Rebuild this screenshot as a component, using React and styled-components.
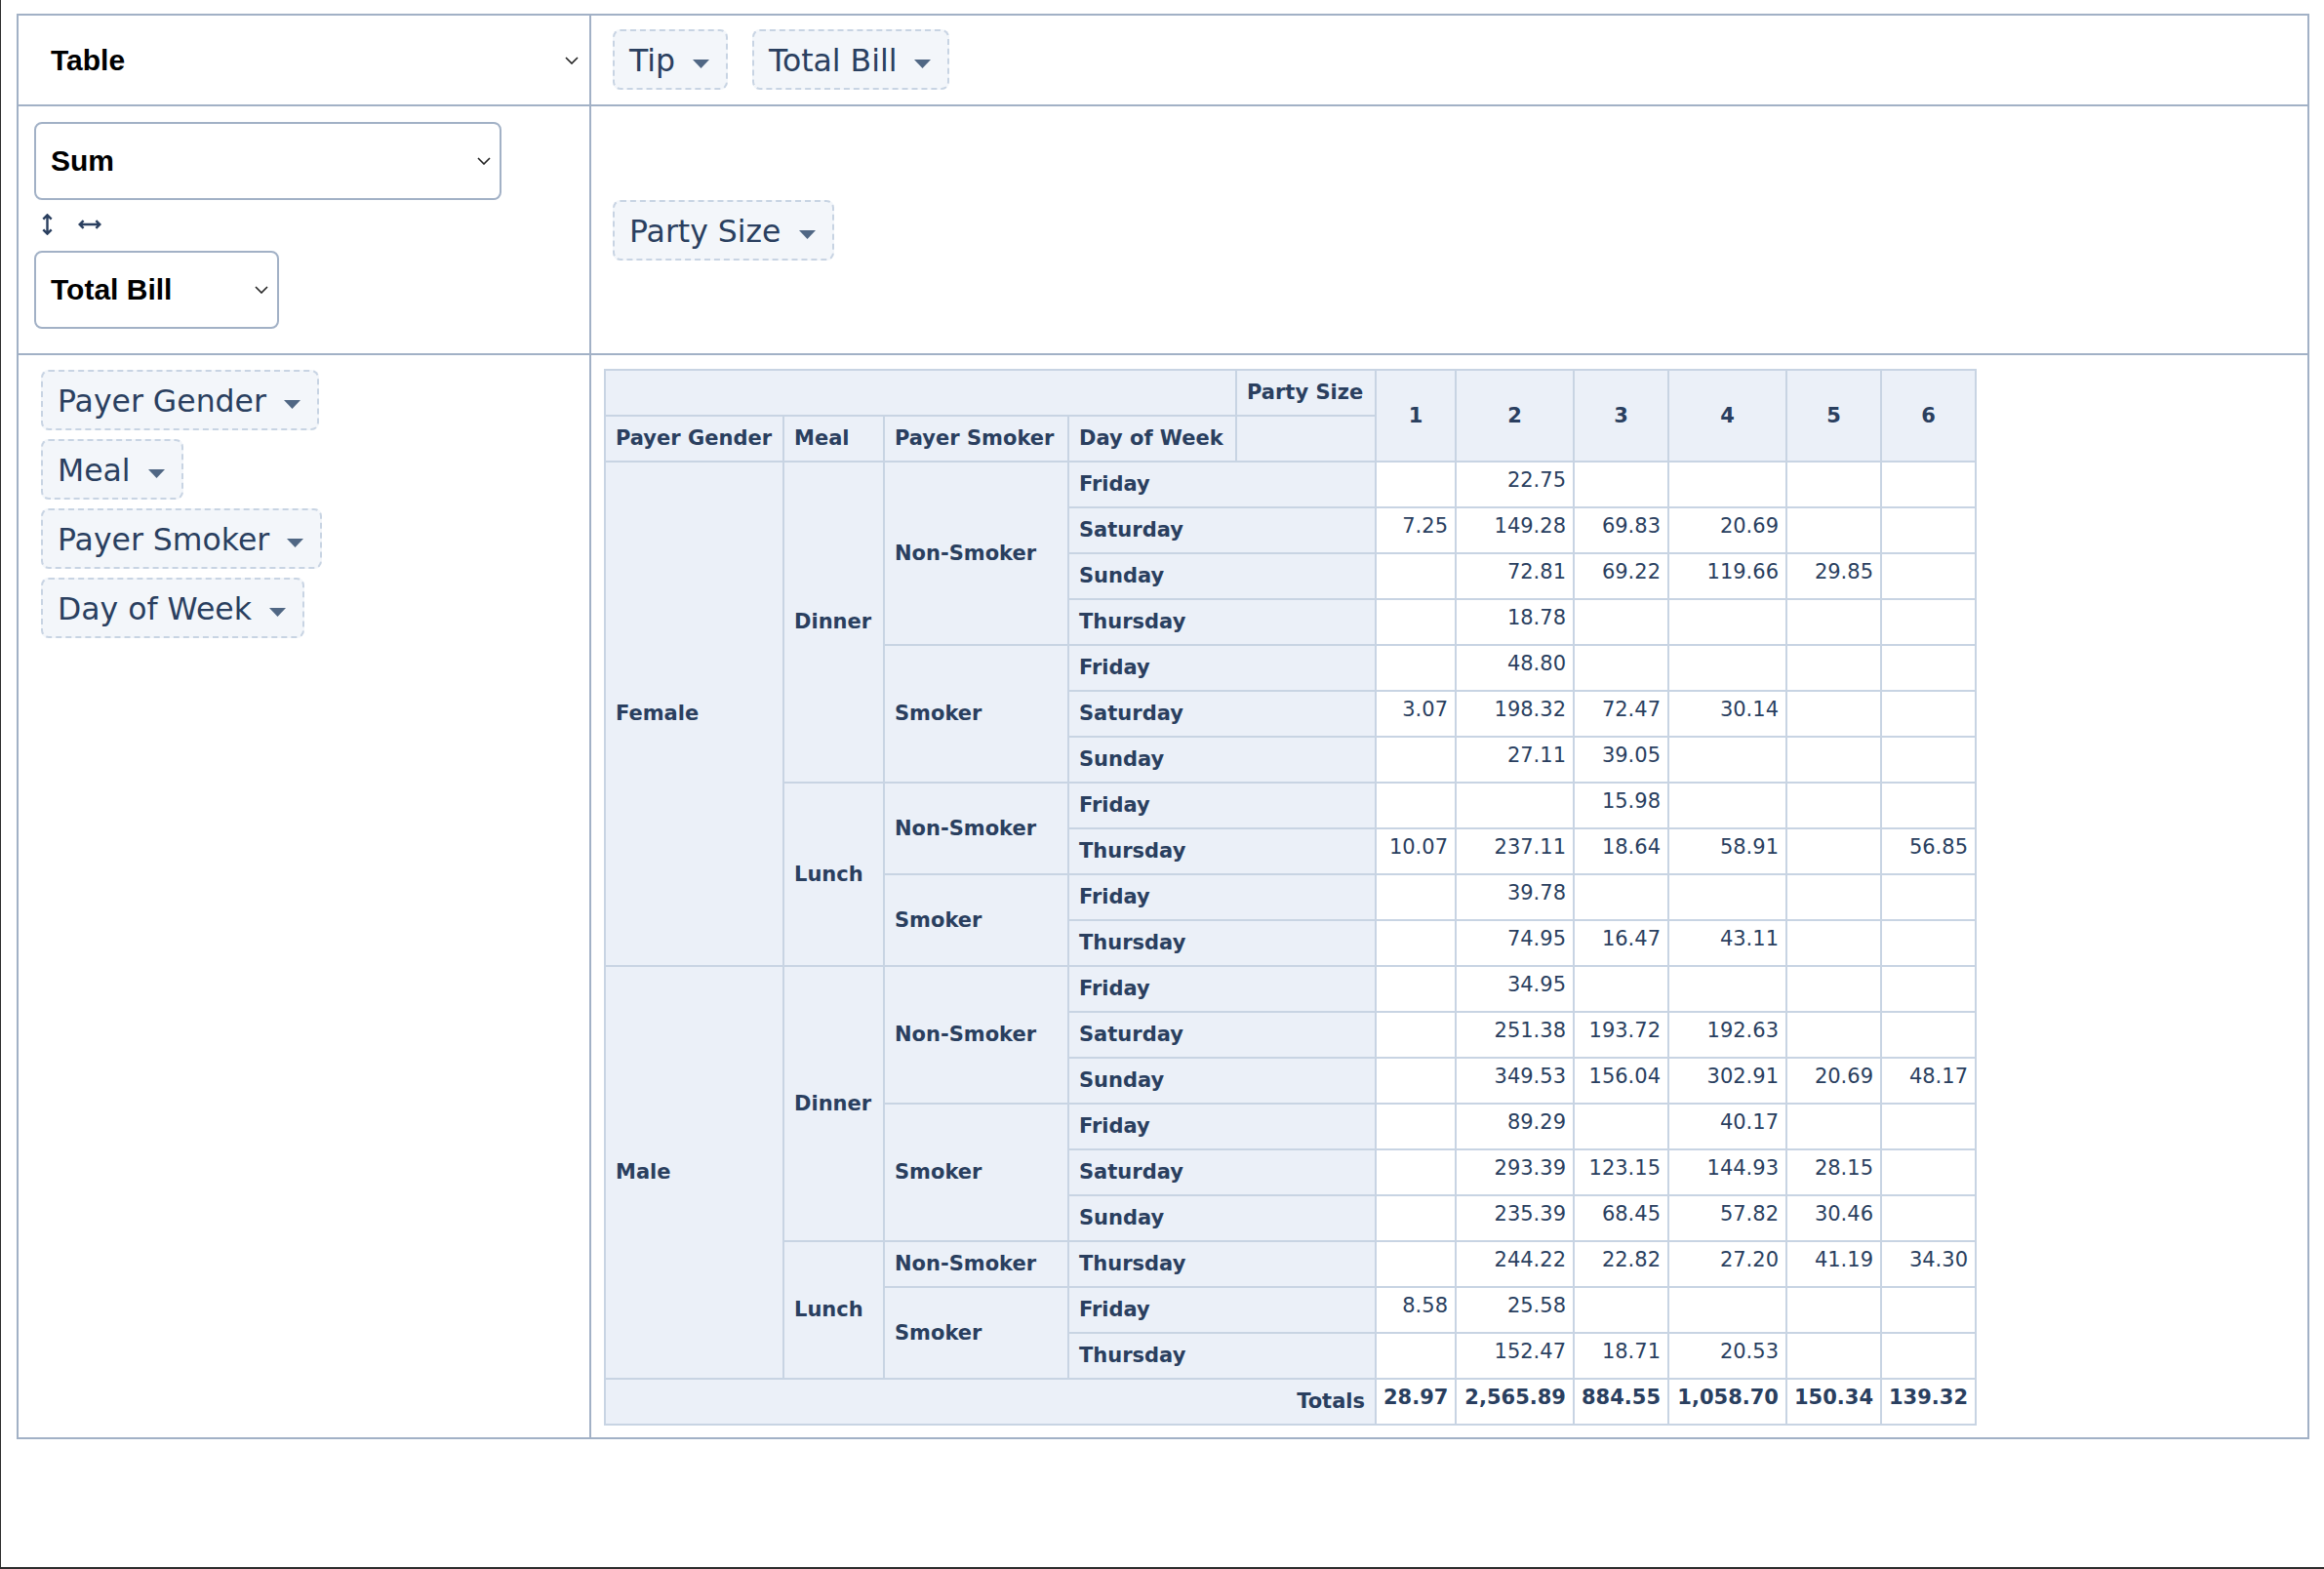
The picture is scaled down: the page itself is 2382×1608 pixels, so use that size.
import React from 'react';
import styled, { createGlobalStyle } from 'styled-components';

const GlobalStyle = createGlobalStyle`
  html, body {
    margin: 0;
    padding: 0;
    background: #fff;
  }
`;

const Frame = styled.div`
  box-sizing: border-box;
  width: 2382px;
  height: 1608px;
  border-left: 1px solid #2e2e2e;
  border-bottom: 2px solid #2e2e2e;
  padding: 14px 15px 0 16px;
  overflow: hidden;
`;

// outer pivot ui: 2 columns x 3 rows, lines come from the gap
const PivotUi = styled.div`
  display: grid;
  grid-template-columns: 585px 1fr;
  gap: 2px;
  padding: 2px;
  background: #a2b1c6;
  color: #2a3f5f;
  font-family: "DejaVu Sans", Verdana, sans-serif;
`;

const Cell = styled.div`
  background: #fff;
  display: flex;
  min-width: 0;
`;

const RendererCell = styled(Cell)`
  align-items: center;
  padding: 0 0 0 16px;
`;

const UnusedCell = styled(Cell)`
  align-items: center;
  gap: 25px;
  padding: 14px 22px 15px;
`;

const ValsCell = styled(Cell)`
  flex-direction: column;
  align-items: flex-start;
  padding: 16px 0 25px 16px;
`;

const ColsCell = styled(Cell)`
  align-items: center;
  padding-left: 22px;
`;

const RowsCell = styled(Cell)`
  flex-direction: column;
  align-items: flex-start;
  gap: 9px;
  padding: 15px 0 0 23px;
`;

const OutputCell = styled(Cell)`
  align-items: flex-start;
  padding: 14px 0 12px 13px;
`;

const Dropdown = styled.div`
  box-sizing: border-box;
  display: flex;
  align-items: center;
  justify-content: space-between;
  height: 80px;
  width: ${({ $width }) => ($width ? `${$width}px` : 'auto')};
  flex: ${({ $width }) => ($width ? 'none' : 1)};
  padding: 0 9px 0 15px;
  border: 2px solid ${({ $bare }) => ($bare ? 'transparent' : '#a2b1c6')};
  border-radius: 8px;
  background: #fff;
  font-family: "Liberation Sans", Arial, sans-serif;
  font-weight: bold;
  font-size: 30px;
  color: #000;
`;

const Chevron = () => (
  <svg width="14" height="8" viewBox="0 0 14 8" fill="none" stroke="#222" strokeWidth="1.6">
    <path d="M1 1l6 6 6-6" />
  </svg>
);

const OrderRow = styled.div`
  display: flex;
  align-items: center;
  gap: 26px;
  height: 52px;
  padding: 0 0 2px 8px;
  box-sizing: border-box;
  color: #2a3f5f;
`;

const RowOrderIcon = () => (
  <svg width="11" height="22" viewBox="0 0 11 22" fill="none" stroke="currentColor" strokeWidth="2.4">
    <path d="M5.5 2v18M1.3 5.6l4.2-4.2 4.2 4.2M1.3 16.4l4.2 4.2 4.2-4.2" />
  </svg>
);

const ColOrderIcon = () => (
  <svg width="24" height="10" viewBox="0 0 24 10" fill="none" stroke="currentColor" strokeWidth="2.4">
    <path d="M2 5h20M5.6 1.1L1.7 5l3.9 3.9M18.4 1.1L22.3 5l-3.9 3.9" />
  </svg>
);

const Chip = styled.span`
  box-sizing: border-box;
  display: inline-flex;
  align-items: center;
  height: 62px;
  padding: 2px 17px 0 15px;
  border: 2px dashed #c8d4e3;
  border-radius: 8px;
  background: #f3f6fa;
  font-size: 31.5px;
  line-height: 36px;
  white-space: nowrap;
  color: #2a3f5f;
`;

const Triangle = styled.svg`
  flex: none;
  margin: 7px 0 0 18px;
`;

const Attr = ({ name }) => (
  <Chip>
    {name}
    <Triangle width="17" height="9" viewBox="0 0 17 9">
      <path d="M0 0h17L8.5 9z" fill="#506784" />
    </Triangle>
  </Chip>
);

const PivotTable = styled.table`
  border-collapse: collapse;
  table-layout: fixed;
  width: 1407px;
  font-family: "DejaVu Sans", Verdana, sans-serif;
  font-size: 21px;
  line-height: 25px;
  color: #2a3f5f;
`;

const HeadCell = styled.th`
  background: #ebf0f8;
  border: 2px solid #c8d4e3;
  padding: 10px;
  font-weight: bold;
  white-space: nowrap;
  text-align: ${({ $align }) => $align || 'left'};
  vertical-align: middle;
`;

const ValueCell = styled.td`
  background: #fff;
  border: 2px solid #c8d4e3;
  padding: 6px 7px 14px;
  text-align: right;
  vertical-align: top;
  white-space: nowrap;
  font-weight: ${({ $total }) => ($total ? 'bold' : 'normal')};
`;

const ROW_ATTRS = ['Payer Gender', 'Meal', 'Payer Smoker', 'Day of Week'];
const COL_KEYS = ['1', '2', '3', '4', '5', '6'];
const COL_WIDTHS = [183, 103, 189, 172, 143, 82, 121, 97, 121, 97, 97];

const ROWS = [
  ['Female', 'Dinner', 'Non-Smoker', 'Friday', ['', '22.75', '', '', '', '']],
  ['Female', 'Dinner', 'Non-Smoker', 'Saturday', ['7.25', '149.28', '69.83', '20.69', '', '']],
  ['Female', 'Dinner', 'Non-Smoker', 'Sunday', ['', '72.81', '69.22', '119.66', '29.85', '']],
  ['Female', 'Dinner', 'Non-Smoker', 'Thursday', ['', '18.78', '', '', '', '']],
  ['Female', 'Dinner', 'Smoker', 'Friday', ['', '48.80', '', '', '', '']],
  ['Female', 'Dinner', 'Smoker', 'Saturday', ['3.07', '198.32', '72.47', '30.14', '', '']],
  ['Female', 'Dinner', 'Smoker', 'Sunday', ['', '27.11', '39.05', '', '', '']],
  ['Female', 'Lunch', 'Non-Smoker', 'Friday', ['', '', '15.98', '', '', '']],
  ['Female', 'Lunch', 'Non-Smoker', 'Thursday', ['10.07', '237.11', '18.64', '58.91', '', '56.85']],
  ['Female', 'Lunch', 'Smoker', 'Friday', ['', '39.78', '', '', '', '']],
  ['Female', 'Lunch', 'Smoker', 'Thursday', ['', '74.95', '16.47', '43.11', '', '']],
  ['Male', 'Dinner', 'Non-Smoker', 'Friday', ['', '34.95', '', '', '', '']],
  ['Male', 'Dinner', 'Non-Smoker', 'Saturday', ['', '251.38', '193.72', '192.63', '', '']],
  ['Male', 'Dinner', 'Non-Smoker', 'Sunday', ['', '349.53', '156.04', '302.91', '20.69', '48.17']],
  ['Male', 'Dinner', 'Smoker', 'Friday', ['', '89.29', '', '40.17', '', '']],
  ['Male', 'Dinner', 'Smoker', 'Saturday', ['', '293.39', '123.15', '144.93', '28.15', '']],
  ['Male', 'Dinner', 'Smoker', 'Sunday', ['', '235.39', '68.45', '57.82', '30.46', '']],
  ['Male', 'Lunch', 'Non-Smoker', 'Thursday', ['', '244.22', '22.82', '27.20', '41.19', '34.30']],
  ['Male', 'Lunch', 'Smoker', 'Friday', ['8.58', '25.58', '', '', '', '']],
  ['Male', 'Lunch', 'Smoker', 'Thursday', ['', '152.47', '18.71', '20.53', '', '']],
];

const TOTALS = ['28.97', '2,565.89', '884.55', '1,058.70', '150.34', '139.32'];

const samePrefix = (a, b, level) =>
  ROWS[a].slice(0, level + 1).every((v, k) => v === ROWS[b][k]);

// rowspan of the label at (row, level); 0 means it is covered by the one above
const spanAt = (i, level) => {
  if (i > 0 && samePrefix(i - 1, i, level)) return 0;
  let n = 1;
  while (i + n < ROWS.length && samePrefix(i, i + n, level)) n++;
  return n;
};

const Output = () => (
  <PivotTable>
    <colgroup>
      {COL_WIDTHS.map((w, i) => (
        <col key={i} style={{ width: w }} />
      ))}
    </colgroup>
    <thead>
      <tr>
        <HeadCell colSpan={ROW_ATTRS.length} />
        <HeadCell>Party Size</HeadCell>
        {COL_KEYS.map((k) => (
          <HeadCell key={k} rowSpan={2} $align="center">{k}</HeadCell>
        ))}
      </tr>
      <tr>
        {ROW_ATTRS.map((a) => (
          <HeadCell key={a}>{a}</HeadCell>
        ))}
        <HeadCell />
      </tr>
    </thead>
    <tbody>
      {ROWS.map((row, i) => (
        <tr key={i}>
          {ROW_ATTRS.map((_, level) => {
            const span = spanAt(i, level);
            if (!span) return null;
            const last = level === ROW_ATTRS.length - 1;
            return (
              <HeadCell key={level} rowSpan={span} colSpan={last ? 2 : 1}>
                {row[level]}
              </HeadCell>
            );
          })}
          {row[4].map((v, j) => (
            <ValueCell key={j}>{v}</ValueCell>
          ))}
        </tr>
      ))}
      <tr>
        <HeadCell colSpan={ROW_ATTRS.length + 1} $align="right">Totals</HeadCell>
        {TOTALS.map((v, j) => (
          <ValueCell key={j} $total>{v}</ValueCell>
        ))}
      </tr>
    </tbody>
  </PivotTable>
);

export default function App() {
  return (
    <Frame>
      <GlobalStyle />
      <PivotUi>
        <RendererCell>
          <Dropdown $bare>
            Table
            <Chevron />
          </Dropdown>
        </RendererCell>
        <UnusedCell>
          <Attr name="Tip" />
          <Attr name="Total Bill" />
        </UnusedCell>

        <ValsCell>
          <Dropdown $width={479}>
            Sum
            <Chevron />
          </Dropdown>
          <OrderRow>
            <RowOrderIcon />
            <ColOrderIcon />
          </OrderRow>
          <Dropdown $width={251}>
            Total Bill
            <Chevron />
          </Dropdown>
        </ValsCell>
        <ColsCell>
          <Attr name="Party Size" />
        </ColsCell>

        <RowsCell>
          {ROW_ATTRS.map((a) => (
            <Attr key={a} name={a} />
          ))}
        </RowsCell>
        <OutputCell>
          <Output />
        </OutputCell>
      </PivotUi>
    </Frame>
  );
}
